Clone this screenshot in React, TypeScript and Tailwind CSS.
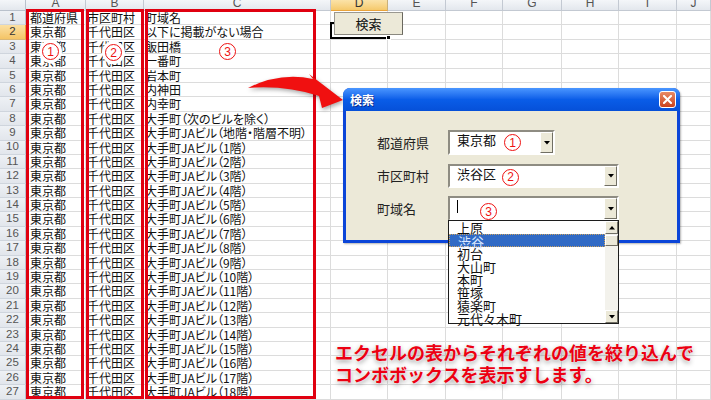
import React from "react";

const colW = [
  "w-[60px]",
  "w-[58px]",
  "w-[187px]",
  "w-[57px]",
  "w-[58px]",
  "w-[57px]",
  "w-[59px]",
  "w-[57px]",
  "w-[58px]",
  "w-[34px]",
];
const letters = ["A", "B", "C", "D", "E", "F", "G", "H", "I", "J"];

const cTexts = [
  "町域名",
  "以下に掲載がない場合",
  "飯田橋",
  "一番町",
  "岩本町",
  "内神田",
  "内幸町",
  "大手町（次のビルを除く）",
  "大手町JAビル（地階・階層不明）",
  ...Array.from({ length: 18 }, (_, i) => `大手町JAビル（${i + 1}階）`),
];

const listItems = ["上原", "渋谷", "初台", "大山町", "本町", "笹塚", "猿楽町", "元代々木町"];

function Circled({ n, className = "" }: { n: number; className?: string }) {
  return (
    <div
      className={`w-[17px] h-[17px] rounded-full border border-[#ee1111] bg-white text-[#ee1111] flex items-center justify-center text-[12px] leading-none font-['Liberation_Sans',sans-serif] ${className}`}
    >
      {n}
    </div>
  );
}

function DropBtn() {
  return (
    <div className="w-[13px] h-full bg-[#ece9d8] border border-t-white border-l-white border-b-[#716f64] border-r-[#716f64] flex items-center justify-center">
      <svg width="6" height="4" viewBox="0 0 6 4">
        <path d="M0 0 L6 0 L3 3.5 Z" fill="#000" />
      </svg>
    </div>
  );
}

export default function App() {
  return (
    <div className="relative w-[711px] h-[400px] overflow-hidden bg-white font-['Noto_Sans_CJK_JP',sans-serif]">
      {/* column header row */}
      <div className="flex h-[11px] overflow-hidden">
        <div className="w-[26px] shrink-0 bg-linear-to-b from-[#f4f6f9] to-[#e3e7ed] border-r border-b border-[#b9c1cc]" />
        {letters.map((l, i) => (
          <div
            key={l}
            className={`${colW[i]} shrink-0 flex justify-center border-r border-b text-[12px] leading-none font-['Liberation_Sans',sans-serif] ${
              l === "D"
                ? "bg-linear-to-b from-[#fbe3a8] to-[#f5c96b] border-r-[#c9b07a] border-b-[#e9a33a] text-[#333]"
                : "bg-linear-to-b from-[#f4f6f9] to-[#e3e7ed] border-[#c3c9d2] text-[#555]"
            }`}
          >
            <span className="-mt-[3px]">{l}</span>
          </div>
        ))}
      </div>

      {/* rows */}
      {cTexts.map((c, i) => {
        const r = i + 1;
        return (
          <div key={r} className="flex h-[14.4px]">
            <div
              className={`w-[26px] shrink-0 flex items-center justify-center border-r border-b text-[11.5px] leading-none font-['Liberation_Sans',sans-serif] ${
                r === 2
                  ? "bg-linear-to-b from-[#fbe0a2] to-[#f4c465] border-r-[#e9a33a] border-b-[#d9b777] text-[#333]"
                  : "bg-linear-to-b from-[#eef1f5] to-[#e2e6ec] border-r-[#b9c1cc] border-b-[#cfd5dd] text-[#555]"
              }`}
            >
              {r}
            </div>
            {letters.map((l, j) => (
              <div
                key={l}
                className={`${colW[j]} shrink-0 border-r border-b border-[#dcdcdc] text-[12px] leading-[14px] text-[#111] whitespace-nowrap overflow-hidden ${
                  j === 0 ? "pl-[4px]" : "pl-[1px]"
                } ${j === 2 ? "[font-feature-settings:'palt']" : ""}`}
              >
                {j === 0 ? (r === 1 ? "都道府県" : "東京都") : j === 1 ? (r === 1 ? "市区町村" : "千代田区") : j === 2 ? c : ""}
              </div>
            ))}
          </div>
        );
      })}

      {/* red boxes */}
      <div className="absolute left-[26px] top-[9px] w-[58px] h-[390px] border-[3px] border-[#e00010]" />
      <div className="absolute left-[86px] top-[9px] w-[58px] h-[390px] border-[3px] border-[#e00010]" />
      <div className="absolute left-[145px] top-[9px] w-[171px] h-[390px] border-[3px] border-[#e00010]" />

      {/* circled numbers in table */}
      <Circled n={1} className="absolute left-[42px] top-[43px] shadow-[0_0_0_3px_white]" />
      <Circled n={2} className="absolute left-[105px] top-[44px] shadow-[0_0_0_3px_white]" />
      <Circled n={3} className="absolute left-[219px] top-[43px]" />

      {/* D2 selection + button */}
      <div className="absolute left-[330px] top-[22px] w-[60px] h-[17px] border-2 border-black" />
      <div className="absolute left-[386px] top-[35px] w-[5px] h-[5px] bg-black border border-white" />
      <div className="absolute left-[334px] top-[12px] w-[69px] h-[23px] bg-[#ece9d8] border border-t-[#9a9890] border-l-[#9a9890] border-r-[#6a685f] border-b-[#8a887f] flex items-center justify-center text-[13px] text-[#111]">
        検索
      </div>

      {/* red arrow */}
      <svg
        className="absolute left-[240px] top-[68px] [filter:drop-shadow(1px_2px_2px_rgba(0,0,0,0.35))]"
        width="112"
        height="48"
        viewBox="0 0 112 48"
      >
        <path
          d="M8 20 Q40 4 73 11 L69 6 L103 32 L82 40 L79 28 Q45 17 8 20 Z"
          fill="#f01010"
        />
      </svg>

      {/* dialog */}
      <div className="absolute left-[343px] top-[88px] w-[337px] h-[155px] flex flex-col rounded-t-[7px] bg-[#0b45d8] shadow-[1px_1px_2px_rgba(0,0,0,0.3)]">
        <div className="h-[23px] shrink-0 flex items-center justify-between pl-[7px] pr-[4px] rounded-t-[7px] bg-linear-to-b from-[#4a96ff] via-[#0a5de8] to-[#0650d8]">
          <span className="text-white text-[12px] font-bold [text-shadow:1px_1px_0_#0a2a8a]">検索</span>
          <div className="w-[17px] h-[17px] rounded-[3px] border border-white bg-linear-to-b from-[#e88a66] to-[#c9401a] flex items-center justify-center">
            <svg width="9" height="9" viewBox="0 0 9 9">
              <path d="M1 1 L8 8 M8 1 L1 8" stroke="#fff" strokeWidth="2" strokeLinecap="square" />
            </svg>
          </div>
        </div>
        <div className="flex-1 mx-[3px] mb-[3px] bg-[#ece9d8] pt-[19px] pl-[31px] flex flex-col gap-[8px]">
          {/* row 1 */}
          <div className="flex items-center h-[25px]">
            <div className="w-[71px] text-[13px] text-[#222]">都道府県</div>
            <div className="w-[107px] h-[25px] flex border-2 border-t-[#8e8c82] border-l-[#8e8c82] border-r-white border-b-white bg-white">
              <div className="flex-1 flex items-start pl-[7px] text-[13px] leading-[16px] text-[#111]">
                東京都
                <Circled n={1} className="ml-[8px] mt-[2px]" />
              </div>
              <div className="py-[0px] pr-[0px]">
                <DropBtn />
              </div>
            </div>
          </div>
          {/* row 2 */}
          <div className="flex items-center h-[25px]">
            <div className="w-[71px] text-[13px] text-[#222]">市区町村</div>
            <div className="w-[171px] h-[24px] flex border-2 border-t-[#8e8c82] border-l-[#8e8c82] border-r-white border-b-white bg-white">
              <div className="flex-1 flex items-start pl-[7px] text-[13px] leading-[16px] text-[#111]">
                渋谷区
                <Circled n={2} className="ml-[6px] mt-[3px]" />
              </div>
              <DropBtn />
            </div>
          </div>
          {/* row 3 */}
          <div className="flex items-center h-[25px]">
            <div className="w-[71px] text-[13px] text-[#222]">町域名</div>
            <div className="w-[171px] h-[25px] flex border-2 border-t-[#8e8c82] border-l-[#8e8c82] border-r-white border-b-white bg-white">
              <div className="flex-1 flex items-start pl-[7px]">
                <div className="w-[1px] h-[13px] bg-black mt-[2px]" />
                <Circled n={3} className="ml-[22px] mt-[5px]" />
              </div>
              <DropBtn />
            </div>
          </div>
        </div>
      </div>

      {/* dropdown list */}
      <div className="absolute left-[448px] top-[220px] w-[171px] h-[104px] border border-[#1c1c1c] bg-white flex">
        <div className="flex-1 flex flex-col">
          {listItems.map((it) => (
            <div
              key={it}
              className={`h-[13px] shrink-0 pl-[8px] text-[13px] leading-[13px] text-[#111] whitespace-nowrap ${
                it === "渋谷" ? "bg-[#316ac5] text-[#dbe8ff] border border-dotted border-[#c8a060] pl-[7px] leading-[11px]" : ""
              }`}
            >
              {it}
            </div>
          ))}
        </div>
        <div className="w-[13px] h-full bg-[#f3f2ec] flex flex-col">
          <div className="h-[13px]">
            <div className="w-[13px] h-[13px] bg-[#ece9d8] border border-t-white border-l-white border-b-[#716f64] border-r-[#716f64] flex items-center justify-center">
              <svg width="6" height="4" viewBox="0 0 6 4">
                <path d="M0 3.5 L6 3.5 L3 0 Z" fill="#000" />
              </svg>
            </div>
          </div>
          <div className="h-[11px] mt-[1px] bg-[#ece9d8] border border-t-white border-l-white border-b-[#716f64] border-r-[#716f64]" />
          <div className="flex-1" />
          <div className="w-[13px] h-[13px] bg-[#ece9d8] border border-t-white border-l-white border-b-[#716f64] border-r-[#716f64] flex items-center justify-center">
            <svg width="6" height="4" viewBox="0 0 6 4">
              <path d="M0 0 L6 0 L3 3.5 Z" fill="#000" />
            </svg>
          </div>
        </div>
      </div>

      {/* caption */}
      <div className="absolute left-[335px] top-[341px] text-[18px] leading-[22px] font-bold text-[#ec0012] whitespace-nowrap [text-shadow:0_0_2px_#fff,0_2px_5px_rgba(0,0,0,0.45)]">
        <div>エクセルの表からそれぞれの値を絞り込んで</div>
        <div>コンボボックスを表示すします。</div>
      </div>
    </div>
  );
}
